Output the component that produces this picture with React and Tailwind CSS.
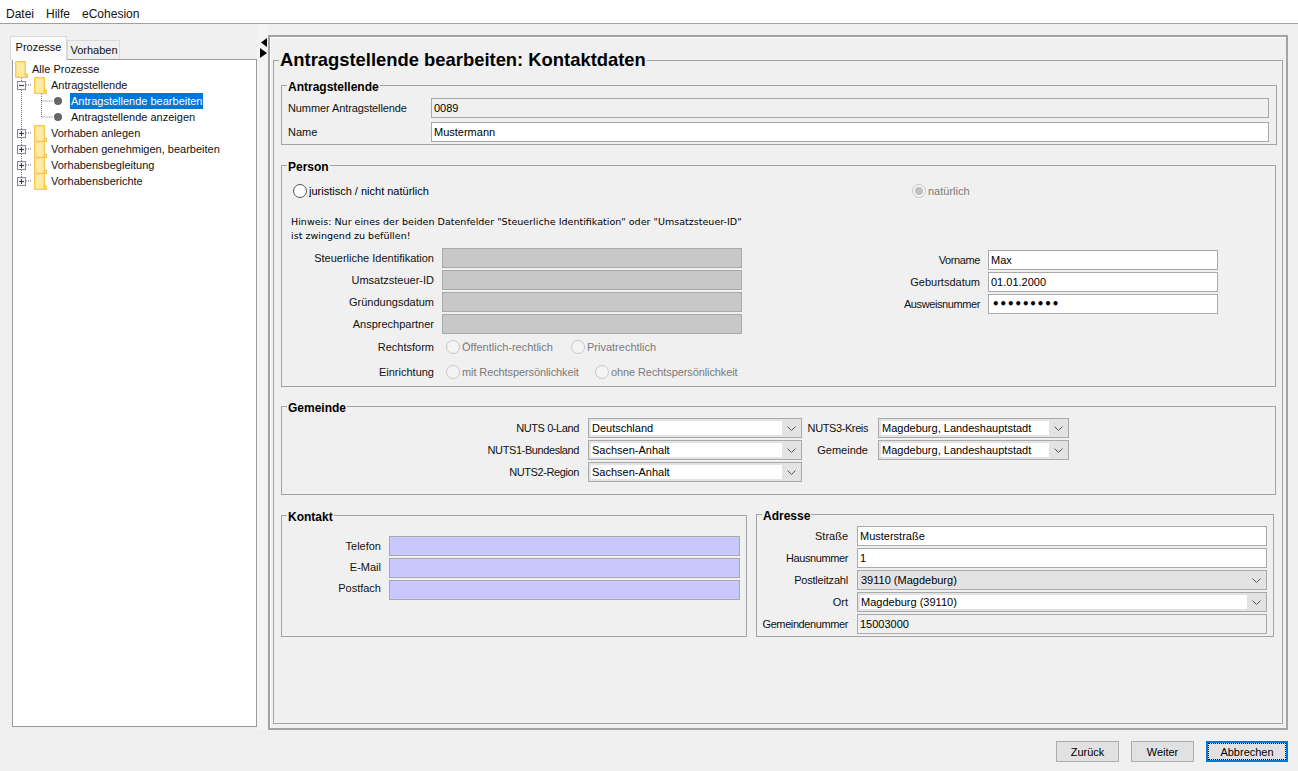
import React from "react";

const Folder = () => (
  <svg width="13" height="17" viewBox="0 0 13 17" className="shrink-0">
    <path d="M1 0.7H10.3V13.2H12.3V16.3H1L0.7 16V1Z" fill="#fee9a6" stroke="#f2c850" strokeWidth="1.3" />
    <path d="M10.3 13.2V16.3" stroke="#f2c850" strokeWidth="1.3" />
  </svg>
);

const Expander = ({ open }) => (
  <svg width="9" height="9" viewBox="0 0 9 9" className="shrink-0 relative z-10">
    <rect x="0.5" y="0.5" width="8" height="8" fill="#f4f4f4" stroke="#8c8c8c" />
    <path d="M2 4.5H7" stroke="#1f3a6e" />
    {!open && <path d="M4.5 2V7" stroke="#1f3a6e" />}
  </svg>
);

const Branch = ({ label, open }) => (
  <div className="flex h-[16px] items-center pl-[4px]">
    <Expander open={open} />
    <span className="ml-[8px]"><Folder /></span>
    <span className="ml-[4px]">{label}</span>
  </div>
);

const Leaf = ({ label, selected }) => (
  <div className="flex h-[16px] items-center pl-[41px]">
    <span className="h-[8px] w-[8px] rounded-full bg-[#666666]" />
    <span className={selected ? "ml-[8px] bg-[#0078d7] px-[1px] leading-[16px] text-white" : "ml-[9px] leading-[16px]"}>{label}</span>
  </div>
);

const Tree = () => (
  <div className="relative ml-[2px] flex-1 border border-[#9c9c9c] bg-white pt-[1px]">
    <svg className="absolute left-0 top-0" width="60" height="130">
      <g stroke="#777777" strokeDasharray="1 1" fill="none">
        <path d="M8.5 18V121" />
        <path d="M13 25H18M13 73H18M13 89H18M13 105H18M13 121H18" />
        <path d="M28.5 34V57" />
        <path d="M28.5 41H40M28.5 57H40" />
      </g>
    </svg>
    <div className="relative">
      <div className="flex h-[16px] items-center pl-[2px]">
        <Folder />
        <span className="ml-[4px]">Alle Prozesse</span>
      </div>
      <Branch label="Antragstellende" open />
      <Leaf label="Antragstellende bearbeiten" selected />
      <Leaf label="Antragstellende anzeigen" />
      <Branch label="Vorhaben anlegen" />
      <Branch label="Vorhaben genehmigen, bearbeiten" />
      <Branch label="Vorhabensbegleitung" />
      <Branch label="Vorhabensberichte" />
    </div>
  </div>
);

const Box = ({ title, className, children }) => (
  <fieldset className={"border border-[#a3a3a3] " + className}>
    <legend className="ml-[5px] px-[1px] text-[12px] font-bold leading-[13px] text-black">
      <span className="inline-block translate-y-[2px]">{title}</span>
    </legend>
    {children}
  </fieldset>
);

const Input = ({ value, tone = "white", className = "" }) => {
  const bg = { white: "bg-white", ro: "bg-[#f0f0f0]", off: "bg-[#c8c8c8]", blue: "bg-[#c8c8ff]" }[tone];
  return (
    <div className={"flex h-[20px] items-center border border-[#a9a9a9] pl-[2px] text-black " + bg + " " + className}>{value}</div>
  );
};

const Combo = ({ value, className = "", off }) => (
  <div className={"flex h-[20px] items-stretch border border-[#a9a9a9] bg-[#e3e3e3] text-black " + className}>
    <div className={"my-[2px] ml-[2px] flex flex-1 items-center pl-[1px] " + (off ? "" : "bg-white")}>{value}</div>
    <div className="flex w-[19px] items-center justify-center">
      <svg width="9" height="5" viewBox="0 0 9 5">
        <path d="M0.5 0.5L4.5 4.5L8.5 0.5" stroke="#555555" fill="none" />
      </svg>
    </div>
  </div>
);

const Row = ({ label, labelW, gap, children, className = "", labelClass = "" }) => (
  <div className={"flex items-center " + className}>
    <div style={{ width: labelW, marginRight: gap }} className={"shrink-0 whitespace-nowrap text-right " + labelClass}>{label}</div>
    {children}
  </div>
);

const Radio = ({ checked, off, label, className = "" }) => (
  <div className={"flex items-center " + className}>
    <span className={"flex h-[14px] w-[14px] items-center justify-center rounded-full border " + (off ? "border-[#c8c8c8] bg-[#f4f4f4]" : "border-[#555555] bg-white")}>
      {checked && <span className="h-[8px] w-[8px] rounded-full bg-[#c0c0c0]" />}
    </span>
    <span className={"ml-[2px] " + (off ? "text-[#7a7a7a]" : "text-black")}>{label}</span>
  </div>
);

export default function App() {
  const tight = "tracking-[-0.4px]";
  return (
    <div className="flex h-[771px] w-[1298px] flex-col overflow-hidden bg-[#f0f0f0] font-['Liberation_Sans',sans-serif] text-[11px] leading-[14px] text-[#111111]">
      <div className="flex h-[24px] shrink-0 items-center gap-[12px] border-b border-[#a0a0a0] bg-white pl-[6px] pt-[4px] text-[12px]">
        <span>Datei</span>
        <span>Hilfe</span>
        <span>eCohesion</span>
      </div>

      <div className="flex min-h-0 flex-1">
        <div className="flex w-[257px] shrink-0 flex-col pb-[3px] pl-[10px] pt-[12px]">
          <div className="relative z-10 flex items-end">
            <div className="-mb-[1px] flex h-[24px] w-[57px] items-start justify-center border border-b-0 border-[#d9d9d9] bg-[#fbfbfb] pt-[3px]">Prozesse</div>
            <div className="flex h-[19px] w-[53px] items-center justify-center border border-b-0 border-[#d9d9d9] bg-[#f0f0f0] pl-[1px]">Vorhaben</div>
          </div>
          <Tree />
        </div>

        <div className="flex w-[11px] shrink-0 flex-col items-end bg-[#f4f4f4] pr-[1px] pt-[14px]">
          <svg width="7" height="20" viewBox="0 0 7 20">
            <path d="M7 0V9L1 4.5Z" fill="#000000" />
            <path d="M0 10V20L7 15Z" fill="#000000" />
          </svg>
        </div>

        <div className="mr-[10px] mt-[11px] flex min-w-0 flex-1 flex-col border-2 border-[#a3a3a3] pb-[4px] pl-[3px] pr-[3px] pt-[12px] shadow-[inset_1px_1px_0_#ffffff]">
          <fieldset className="flex-1 border border-[#a3a3a3] pl-[7px] pr-[6px]">
            <legend className="-ml-[2px] px-[1px] text-[18.4px] font-bold leading-[22px] text-black">Antragstellende bearbeiten: Kontaktdaten</legend>

            <Box title="Antragstellende" className="-mr-[1px] mt-[8px]">
              <div className="flex flex-col gap-[4px] pb-[2px] pl-[6px] pr-[7px] pt-[6px]">
                <div className="flex items-center">
                  <div className="w-[143px] shrink-0 tracking-[-0.1px]">Nummer Antragstellende</div>
                  <Input value="0089" tone="ro" className="flex-1" />
                </div>
                <div className="flex items-center">
                  <div className="w-[143px] shrink-0">Name</div>
                  <Input value="Mustermann" className="flex-1" />
                </div>
              </div>
            </Box>

            <Box title="Person" className="mt-[14px] h-[228px]">
              <div className="flex">
                <div className="w-[618px] shrink-0">
                  <Radio label="juristisch / nicht natürlich" className="ml-[11px] mt-[12px]" />
                  <p className="ml-[9px] mt-[17px] font-['DejaVu_Sans',sans-serif] text-[9.56px] leading-[14px] text-black">
                    Hinweis: Nur eines der beiden Datenfelder "Steuerliche Identifikation" oder "Umsatzsteuer-ID"<br />ist zwingend zu befüllen!
                  </p>
                  <div className="mt-[5px] flex flex-col gap-[2px]">
                    {["Steuerliche Identifikation", "Umsatzsteuer-ID", "Gründungsdatum", "Ansprechpartner"].map((l) => (
                      <Row key={l} label={l} labelW={152} gap={8}>
                        <Input tone="off" className="w-[300px]" />
                      </Row>
                    ))}
                  </div>
                  <Row label="Rechtsform" labelW={152} gap={12} className="mt-[6px]">
                    <Radio off label="Öffentlich-rechtlich" className="w-[125px]" />
                    <Radio off label="Privatrechtlich" />
                  </Row>
                  <Row label="Einrichtung" labelW={152} gap={12} className="mt-[11px]">
                    <Radio off label="mit Rechtspersönlichkeit" className="w-[149px] tracking-[-0.1px]" />
                    <Radio off label="ohne Rechtspersönlichkeit" className="tracking-[-0.1px]" />
                  </Row>
                </div>
                <div className="flex-1">
                  <Radio checked off label="natürlich" className="ml-[12px] mt-[12px]" />
                  <div className="mt-[52px] flex flex-col gap-[2px]">
                    <Row label="Vorname" labelW={80} gap={8} labelClass={tight}><Input value="Max" className="w-[230px]" /></Row>
                    <Row label="Geburtsdatum" labelW={80} gap={8}><Input value="01.01.2000" className="w-[230px]" /></Row>
                    <Row label="Ausweisnummer" labelW={80} gap={8} labelClass={tight}>
                      <Input value={<span className="pl-[1px] font-['DejaVu_Sans',sans-serif] text-[11.7px] font-bold">•••••••••</span>} className="w-[230px]" />
                    </Row>
                  </div>
                </div>
              </div>
            </Box>

            <Box title="Gemeinde" className="mt-[13px] h-[95px] pt-[5px]">
              <div className="flex">
                <div className="flex flex-col gap-[2px]">
                  <Row label="NUTS 0-Land" labelW={297} gap={9} labelClass={tight}><Combo value="Deutschland" className="w-[214px]" /></Row>
                  <Row label="NUTS1-Bundesland" labelW={297} gap={9} labelClass={tight}><Combo value="Sachsen-Anhalt" className="w-[214px]" /></Row>
                  <Row label="NUTS2-Region" labelW={297} gap={9} labelClass={tight}><Combo value="Sachsen-Anhalt" className="w-[214px]" /></Row>
                </div>
                <div className="flex flex-col gap-[2px]">
                  <Row label="NUTS3-Kreis" labelW={66} gap={10} labelClass={tight}><Combo value="Magdeburg, Landeshauptstadt" className="w-[191px]" /></Row>
                  <Row label="Gemeinde" labelW={66} gap={10}><Combo value="Magdeburg, Landeshauptstadt" className="w-[191px]" /></Row>
                </div>
              </div>
            </Box>

            <div className="mt-[13px] flex items-start">
              <Box title="Kontakt" className="mt-[1px] h-[128px] w-[466px] shrink-0 pt-[14px]">
                <div className="flex flex-col gap-[2px]">
                  <Row label="Telefon" labelW={99} gap={8}><Input tone="blue" className="w-[351px]" /></Row>
                  <Row label="E-Mail" labelW={99} gap={8} labelClass="-translate-y-[1px]"><Input tone="blue" className="w-[351px]" /></Row>
                  <Row label="Postfach" labelW={99} gap={8} labelClass="-translate-y-[2px]"><Input tone="blue" className="w-[351px]" /></Row>
                </div>
              </Box>
              <Box title="Adresse" className="ml-[9px] h-[129px] w-[518px] shrink-0 pt-[5px]">
                <div className="flex flex-col gap-[2px]">
                  <Row label="Straße" labelW={91} gap={9}><Input value="Musterstraße" className="w-[410px]" /></Row>
                  <Row label="Hausnummer" labelW={91} gap={9} labelClass={tight}><Input value="1" className="w-[410px]" /></Row>
                  <Row label="Postleitzahl" labelW={91} gap={9} labelClass="tracking-[-0.2px]"><Combo off value="39110 (Magdeburg)" className="w-[410px]" /></Row>
                  <Row label="Ort" labelW={91} gap={9}><Combo value="Magdeburg (39110)" className="w-[410px]" /></Row>
                  <Row label="Gemeindenummer" labelW={91} gap={9} labelClass={tight}><Input tone="ro" value="15003000" className="w-[410px]" /></Row>
                </div>
              </Box>
            </div>
          </fieldset>
        </div>
      </div>

      <div className="flex h-[41px] shrink-0 items-start justify-end pr-[10px] pt-[11px] text-black">
        <button className="mr-[12px] h-[21px] w-[63px] border border-[#adadad] bg-[#e1e1e1]">Zurück</button>
        <button className="mr-[12px] h-[21px] w-[63px] border border-[#adadad] bg-[#e1e1e1]">Weiter</button>
        <button className="flex h-[21px] w-[82px] items-center justify-center border-2 border-[#0078d7] bg-[#e1e1e1] outline-1 -outline-offset-3 outline-dotted outline-black">Abbrechen</button>
      </div>
    </div>
  );
}
